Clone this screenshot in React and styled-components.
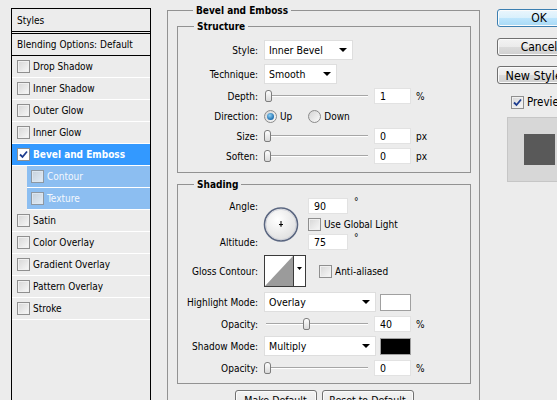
import React from "react";
import styled, { createGlobalStyle } from "styled-components";

const GlobalStyle = createGlobalStyle`
  html, body {
    margin: 0;
    padding: 0;
    overflow: hidden;
    background: #ececec;
  }
  body {
    font-family: "DejaVu Sans Condensed", "Liberation Sans", sans-serif;
    font-size: 10px;
    color: #000;
  }
`;

const Dialog = styled.div`
  display: flex;
  align-items: flex-start;
  width: 557px;
  height: 400px;
  overflow: hidden;
`;

/* ---------- left list ---------- */

const StylesList = styled.div`
  flex-shrink: 0;
  width: 138px;
  height: 420px;
  margin: 8px 0 0 11px;
  border: 1px solid #000;
  border-bottom: none;
`;

const ListHeader = styled.div`
  display: flex;
  align-items: center;
  height: ${(p) => p.$h}px;
  padding-left: 5px;
  border-bottom: ${(p) => p.$border};
`;

const StyleRow = styled.div`
  display: flex;
  align-items: center;
  gap: 3px;
  height: 21px;
  border-bottom: 1px solid #fff;
  margin-left: ${(p) => (p.$sub ? 15 : 0)}px;
  padding-left: ${(p) => (p.$sub ? 4 : 5)}px;
  background: ${(p) => (p.$selected ? "#3399ff" : p.$sub ? "#8cbef1" : "transparent")};
  color: ${(p) => (p.$selected ? "#fff" : p.$sub ? "#f4f8fd" : "#000")};
  font-weight: ${(p) => (p.$selected ? "bold" : "normal")};
`;

const Box = styled.span`
  display: inline-flex;
  align-items: center;
  justify-content: center;
  flex-shrink: 0;
  box-sizing: border-box;
  width: 13px;
  height: 13px;
  border: 1px solid #8f8f8f;
  background: ${(p) => (p.$white ? "#fff" : "linear-gradient(135deg, #d6d6d6, #f8f8f8)")};
  box-shadow: inset 0 0 0 1px ${(p) => (p.$white ? "#fff" : "#f0f0f0")};
  opacity: ${(p) => (p.$dim ? 0.8 : 1)};
`;

function Checkbox({ checked, white, dim }) {
  return (
    <Box $white={white} $dim={dim}>
      {checked && (
        <svg width="9" height="9" viewBox="0 0 9 9">
          <path d="M1 4.5 L3.5 7 L8 1.5" fill="none" stroke="#1d3c8f" strokeWidth="1.8" />
        </svg>
      )}
    </Box>
  );
}

/* ---------- group boxes ---------- */

const OuterGroup = styled.div`
  flex-shrink: 0;
  box-sizing: border-box;
  width: 313px;
  margin: 10px 0 0 16px;
  padding: 0 8px 20px 9px;
  border: 1px solid #929292;
`;

const Group = styled.div`
  margin-top: ${(p) => p.$top}px;
  border: 1px solid #929292;
  padding-bottom: ${(p) => p.$bottom}px;
`;

const GroupTitle = styled.div`
  display: table;
  margin: -7px 0 0 16px;
  padding: 0 3px;
  line-height: 13px;
  font-weight: bold;
  background: #ececec;
`;

const Rows = styled.div`
  display: flex;
  flex-direction: column;
  gap: 4px;
  margin-top: ${(p) => p.$top}px;
`;

const Row = styled.div`
  display: flex;
  align-items: center;
  gap: 6px;
  height: ${(p) => p.$h}px;
  margin: ${(p) => p.$m || 0};
`;

const Label = styled.span`
  flex-shrink: 0;
  width: 80px;
  text-align: right;
`;

const Select = styled.div`
  display: flex;
  align-items: center;
  justify-content: space-between;
  box-sizing: border-box;
  width: ${(p) => p.$w}px;
  height: 20px;
  padding: 0 5px 0 4px;
  background: #fff;
  border: 1px solid #dedede;
  font-size: 10.5px;
  &::after {
    content: "";
    border-left: 4px solid transparent;
    border-right: 4px solid transparent;
    border-top: 4px solid #000;
  }
`;

const NumberField = styled.div`
  display: flex;
  align-items: center;
  box-sizing: border-box;
  width: ${(p) => p.$w || 37}px;
  height: 16px;
  padding-left: 5px;
  background: #fff;
  border: 1px solid #e2e2e2;
  font-size: 10.5px;
`;

const Unit = styled.span`
  margin-left: -1px;
`;

const Track = styled.div`
  position: relative;
  flex-shrink: 0;
  width: 104px;
  height: 12px;
  &::before {
    content: "";
    position: absolute;
    left: 2px;
    right: 0;
    top: 5px;
    height: 1px;
    background: #a6a6a6;
    border-bottom: 1px solid #fff;
  }
`;

const Thumb = styled.span`
  position: absolute;
  top: 0;
  box-sizing: border-box;
  width: 7px;
  height: 12px;
  border: 1px solid #7d7d7d;
  border-radius: 3px 3px 2px 2px;
  background: linear-gradient(#fefefe, #d9d9d9);
`;

function Slider({ value }) {
  return (
    <Track>
      <Thumb style={{ left: Math.round((value / 100) * 97) }} />
    </Track>
  );
}

const RadioOption = styled.span`
  display: inline-flex;
  align-items: center;
  gap: 3px;
  margin-right: ${(p) => p.$mr || 0}px;
`;

const RadioDot = styled.span`
  display: inline-flex;
  align-items: center;
  justify-content: center;
  box-sizing: border-box;
  width: 13px;
  height: 13px;
  border-radius: 50%;
  border: 1px solid #8a8a8a;
  background: linear-gradient(135deg, #d4d4d4, #fafafa);
  &::after {
    content: "";
    display: ${(p) => (p.$on ? "block" : "none")};
    width: 7px;
    height: 7px;
    border-radius: 50%;
    background: radial-gradient(circle at 40% 35%, #8fd1f5, #1f6eaf 70%);
  }
`;

const Swatch = styled.span`
  box-sizing: border-box;
  width: 31px;
  height: 17px;
  margin-left: -2px;
  border: 1px solid #a0a0a0;
  background: ${(p) => p.$color};
`;

const AngleGrid = styled.div`
  display: grid;
  grid-template-columns: 80px 36px auto;
  grid-template-rows: 16px 16px 16px;
  column-gap: 6px;
  row-gap: 2px;
  align-items: center;
`;

const DialCell = styled.div`
  grid-column: 2;
  grid-row: 1 / span 3;
  display: flex;
  margin-left: -1px;
`;

const InputWithUnit = styled.div`
  display: flex;
  align-items: flex-start;
  gap: 6px;
  height: 16px;
  margin-left: 2px;
`;

const Degree = styled.span`
  line-height: 8px;
`;

const CheckLabel = styled.label`
  display: inline-flex;
  align-items: center;
  gap: 3px;
  margin-left: ${(p) => p.$ml || 0}px;
`;

/* ---------- bottom / right buttons ---------- */

const ButtonRow = styled.div`
  display: flex;
  justify-content: center;
  gap: 5px;
  margin-top: 6px;
`;

const Button = styled.button`
  box-sizing: border-box;
  width: ${(p) => p.$w || 84}px;
  height: ${(p) => p.$h || 18}px;
  padding: 0;
  font-family: "DejaVu Sans Condensed", "Liberation Sans", sans-serif;
  font-size: ${(p) => p.$fs || 12}px;
  color: #000;
  border: 1px solid #707070;
  border-radius: 3px;
  background: linear-gradient(#f3f3f3 0%, #ebebeb 50%, #dcdcdc 50%, #cfcfcf 100%);
  box-shadow: inset 0 0 0 1px #fbfbfb;
`;

const DefaultButton = styled(Button)`
  border-color: #3c7fb1;
  background: linear-gradient(#eaf6fd 0%, #d9f0fc 50%, #bee6fd 50%, #a7d9f5 100%);
`;

const SideColumn = styled.div`
  flex-shrink: 0;
  display: flex;
  flex-direction: column;
  align-items: flex-start;
  width: 90px;
  margin: 9px 0 0 17px;
`;

const PreviewToggle = styled(CheckLabel)`
  margin: 11px 0 0 14px;
  font-size: 11.5px;
`;

const PreviewBox = styled.div`
  display: flex;
  align-items: center;
  justify-content: center;
  box-sizing: border-box;
  width: 65px;
  height: 65px;
  margin: 8px 0 0 10px;
  background: #d7d7d7;
  border: 1px solid #c6c6c6;
  &::after {
    content: "";
    width: 31px;
    height: 31px;
    background: #595959;
  }
`;

function AngleDial() {
  return (
    <svg width="36" height="37" viewBox="0 0 36 37">
      <defs>
        <radialGradient id="dialFill" cx="40%" cy="35%" r="70%">
          <stop offset="0" stopColor="#ffffff" />
          <stop offset="1" stopColor="#dedede" />
        </radialGradient>
      </defs>
      <circle cx="18" cy="18.5" r="16.5" fill="url(#dialFill)" stroke="#5a6680" strokeWidth="1.6" />
      <circle cx="18" cy="18.5" r="15.2" fill="none" stroke="#c9ccd4" strokeWidth="0.8" />
      <path d="M18 15 V19.5 M16 18.5 H20" stroke="#000" strokeWidth="1" />
      <path d="M16.8 19.5 L19.2 19.5 L18 21 Z" fill="#000" />
    </svg>
  );
}

function ContourPicker() {
  return (
    <svg width="42" height="32" viewBox="0 0 42 32">
      <rect x="0.5" y="0.5" width="41" height="31" fill="#fff" stroke="#3a3a3a" />
      <polygon points="1,31 29,1 29,31" fill="#9b9b9b" />
      <line x1="29.5" y1="1" x2="29.5" y2="31" stroke="#3a3a3a" />
      <polygon points="33,12 38,12 35.5,15" fill="#000" />
    </svg>
  );
}

const styleItems = [
  { name: "Drop Shadow" },
  { name: "Inner Shadow" },
  { name: "Outer Glow" },
  { name: "Inner Glow" },
  { name: "Bevel and Emboss", checked: true, selected: true },
  { name: "Contour", sub: true },
  { name: "Texture", sub: true },
  { name: "Satin" },
  { name: "Color Overlay" },
  { name: "Gradient Overlay" },
  { name: "Pattern Overlay" },
  { name: "Stroke" },
];

export default function App() {
  return (
    <>
      <GlobalStyle />
      <Dialog>
        <StylesList>
          <ListHeader $h={22} $border="3px double #000">Styles</ListHeader>
          <ListHeader $h={21} $border="1px solid #000">Blending Options: Default</ListHeader>
          {styleItems.map((item) => (
            <StyleRow key={item.name} $selected={item.selected} $sub={item.sub}>
              <Checkbox checked={item.checked} white={item.selected} dim={item.sub} />
              {item.name}
            </StyleRow>
          ))}
        </StylesList>

        <OuterGroup>
          <GroupTitle>Bevel and Emboss</GroupTitle>

          <Group $top={9} $bottom={8}>
            <GroupTitle>Structure</GroupTitle>
            <Rows $top={7}>
              <Row $h={20}>
                <Label>Style:</Label>
                <Select $w={89}>Inner Bevel</Select>
              </Row>
              <Row $h={20}>
                <Label>Technique:</Label>
                <Select $w={73}>Smooth</Select>
              </Row>
              <Row $h={16}>
                <Label>Depth:</Label>
                <Slider value={1} />
                <NumberField>1</NumberField>
                <Unit>%</Unit>
              </Row>
              <Row $h={16}>
                <Label>Direction:</Label>
                <RadioOption $mr={10}>
                  <RadioDot $on />
                  Up
                </RadioOption>
                <RadioOption>
                  <RadioDot />
                  Down
                </RadioOption>
              </Row>
              <Row $h={16}>
                <Label>Size:</Label>
                <Slider value={0} />
                <NumberField>0</NumberField>
                <Unit>px</Unit>
              </Row>
              <Row $h={16}>
                <Label>Soften:</Label>
                <Slider value={0} />
                <NumberField>0</NumberField>
                <Unit>px</Unit>
              </Row>
            </Rows>
          </Group>

          <Group $top={11} $bottom={7}>
            <GroupTitle>Shading</GroupTitle>
            <Rows $top={7}>
              <AngleGrid>
                <Label style={{ gridRow: 1 }}>Angle:</Label>
                <DialCell>
                  <AngleDial />
                </DialCell>
                <InputWithUnit style={{ gridColumn: 3, gridRow: 1 }}>
                  <NumberField $w={40}>90</NumberField>
                  <Degree>°</Degree>
                </InputWithUnit>
                <CheckLabel style={{ gridColumn: 3, gridRow: 2 }} $ml={2}>
                  <Checkbox />
                  Use Global Light
                </CheckLabel>
                <Label style={{ gridColumn: 1, gridRow: 3 }}>Altitude:</Label>
                <InputWithUnit style={{ gridColumn: 3, gridRow: 3 }}>
                  <NumberField $w={40}>75</NumberField>
                  <Degree>°</Degree>
                </InputWithUnit>
              </AngleGrid>
              <Row $h={32} $m="1px 0">
                <Label>Gloss Contour:</Label>
                <ContourPicker />
                <CheckLabel $ml={7}>
                  <Checkbox />
                  Anti-aliased
                </CheckLabel>
              </Row>
              <Row $h={20}>
                <Label>Highlight Mode:</Label>
                <Select $w={112}>Overlay</Select>
                <Swatch $color="#fff" />
              </Row>
              <Row $h={16}>
                <Label>Opacity:</Label>
                <Slider value={40} />
                <NumberField>40</NumberField>
                <Unit>%</Unit>
              </Row>
              <Row $h={20}>
                <Label>Shadow Mode:</Label>
                <Select $w={112}>Multiply</Select>
                <Swatch $color="#000" />
              </Row>
              <Row $h={16}>
                <Label>Opacity:</Label>
                <Slider value={0} />
                <NumberField>0</NumberField>
                <Unit>%</Unit>
              </Row>
            </Rows>
          </Group>

          <ButtonRow>
            <Button $w={82} $h={20} $fs={10.5}>Make Default</Button>
            <Button $w={92} $h={20} $fs={10.5}>Reset to Default</Button>
          </ButtonRow>
        </OuterGroup>

        <SideColumn>
          <DefaultButton>OK</DefaultButton>
          <Button style={{ marginTop: 11 }}>Cancel</Button>
          <Button style={{ marginTop: 10 }} $fs={12.5}>New Style...</Button>
          <PreviewToggle>
            <Checkbox checked />
            Preview
          </PreviewToggle>
          <PreviewBox />
        </SideColumn>
      </Dialog>
    </>
  );
}
